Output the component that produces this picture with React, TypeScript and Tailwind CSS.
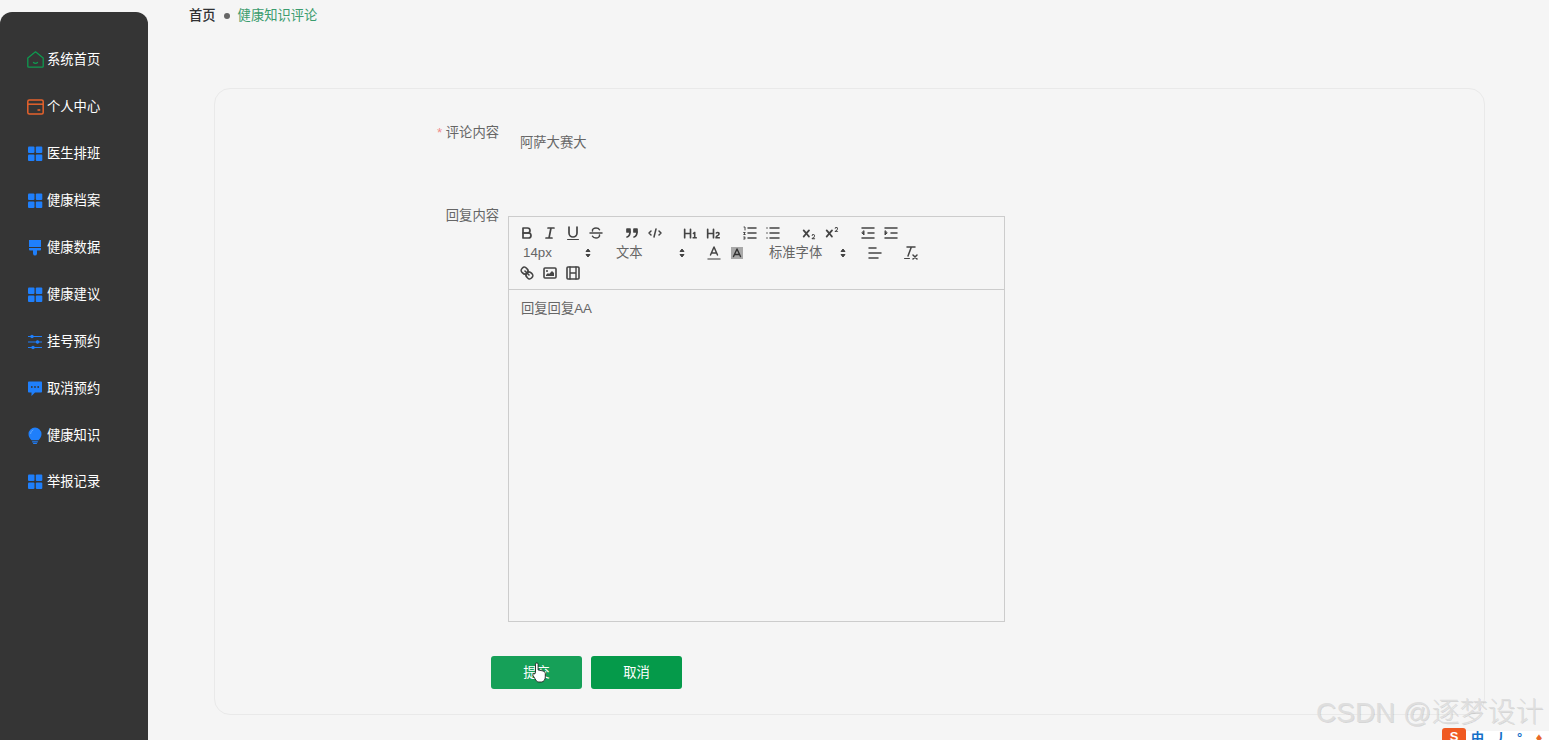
import type { ReactNode } from 'react';

const cjk = "font-['Arial','Liberation_Sans','Noto_Sans_CJK_SC',sans-serif]";

function Svg({ children, size = 18 }: { children: ReactNode; size?: number }) {
  return (
    <svg width={size} height={size} viewBox="0 0 18 18" fill="none" stroke="#444" strokeWidth={1.7} strokeLinecap="round" strokeLinejoin="round">
      {children}
    </svg>
  );
}

const Grid = () => (
  <svg width="18" height="18" viewBox="0 0 18 18" fill="#1f7ffb">
    <rect x="1" y="1.500" width="6.500" height="6.500" rx="1" />
    <rect x="8.800" y="1.500" width="6.500" height="6.500" rx="1" />
    <rect x="1" y="9.500" width="6.500" height="6.500" rx="1" />
    <rect x="8.800" y="9.500" width="6.500" height="6.500" rx="1" />
  </svg>
);

const Home = () => (
  <svg width="18" height="18" viewBox="0 0 18 18" fill="none" stroke="#0f9a50" strokeWidth="1.300" strokeLinejoin="round" strokeLinecap="round">
    <path d="M.8 7 8.500 .8 16.200 7v8.200a1 1 0 0 1-1 1H1.800a1 1 0 0 1-1-1z" />
    <path d="M6.500 11.500c1 1 3 1 4 0" />
  </svg>
);

const Wallet = () => (
  <svg width="18" height="18" viewBox="0 0 18 18" fill="none" stroke="#e5622c" strokeWidth="1.500">
    <rect x=".8" y="2" width="15.400" height="14" rx="1.500" />
    <path d="M.8 6.200h15.400" />
    <path d="M10.500 12h2.800" strokeWidth="1.600" />
  </svg>
);

const Brush = () => (
  <svg width="18" height="18" viewBox="0 0 18 18" fill="#1f7ffb">
    <path d="M2 1h12v7H2z" />
    <path d="M2 9h12v1.500a1 1 0 0 1-1 1h-3V14.500a2 2 0 0 1-4 0v-3H3a1 1 0 0 1-1-1z" />
  </svg>
);

const Sliders = () => (
  <svg width="18" height="18" viewBox="0 0 18 18" fill="#1f7ffb" stroke="#1f7ffb" strokeWidth="1.100">
    <path d="M1 3.500h14M1 9h14M1 14.500h14" />
    <circle cx="5" cy="3.500" r="1.200" />
    <circle cx="10.500" cy="9" r="1.200" />
    <circle cx="6" cy="14.500" r="1.200" />
  </svg>
);

const Chat = () => (
  <svg width="18" height="18" viewBox="0 0 18 18">
    <path fill="#1f7ffb" d="M1.800 1.500h12.400a.8.8 0 0 1 .8.8v9.400a.8.8 0 0 1-.8.8H8L4.500 16v-3.500H1.800a.8.8 0 0 1-.8-.8V2.300a.8.8 0 0 1 .8-.8z" />
    <circle cx="4.800" cy="7" r=".9" fill="#353535" />
    <circle cx="8" cy="7" r=".9" fill="#353535" />
    <circle cx="11.200" cy="7" r=".9" fill="#353535" />
  </svg>
);

const Bulb = () => (
  <svg width="18" height="18" viewBox="0 0 18 18" fill="#1f7ffb">
    <path d="M8 .5a6.500 6.500 0 0 1 6.500 6.500c0 2.800-1.500 4.500-3 6.200h-7C3 11.500 1.500 9.800 1.500 7A6.500 6.500 0 0 1 8 .5z" />
    <rect x="5" y="14.200" width="6" height="1.200" rx=".6" />
    <rect x="6" y="16" width="4" height="1.100" rx=".5" />
    <path d="M3.500 7a4.600 4.600 0 0 1 2.800-4.200" fill="none" stroke="#6fb0ff" strokeWidth=".8" />
  </svg>
);

const menu: { label: string; icon: ReactNode }[] = [
  { label: '系统首页', icon: <Home /> },
  { label: '个人中心', icon: <Wallet /> },
  { label: '医生排班', icon: <Grid /> },
  { label: '健康档案', icon: <Grid /> },
  { label: '健康数据', icon: <Brush /> },
  { label: '健康建议', icon: <Grid /> },
  { label: '挂号预约', icon: <Sliders /> },
  { label: '取消预约', icon: <Chat /> },
  { label: '健康知识', icon: <Bulb /> },
  { label: '举报记录', icon: <Grid /> },
];

const Btn = ({ children }: { children: ReactNode }) => (
  <span className="flex h-5 w-[23px] items-center justify-center">{children}</span>
);

const Group = ({ children }: { children: ReactNode }) => <div className="flex">{children}</div>;

const Arrows = () => (
  <svg className="-mr-[2px]" width="18" height="18" viewBox="0 0 18 18" fill="#444" stroke="#444" strokeWidth="1" strokeLinejoin="round">
    <polygon points="7 7.500 9 5 11 7.500" />
    <polygon points="7 10.500 9 13 11 10.500" />
  </svg>
);

function Picker({ label, width }: { label: string; width: string }) {
  return (
    <div className={`flex h-5 items-center justify-between pl-2 text-[13.3px] text-[#666] ${width}`}>
      <span>{label}</span>
      <Arrows />
    </div>
  );
}

function Toolbar() {
  return (
    <div className="border-b border-[#ccc] pb-[6px] pl-[6px] pt-[6px]">
      <div className="flex gap-[13px]">
        <Group>
          <Btn>
            <Svg>
              <path d="M5 4h4.500A2.500 2.500 0 0 1 12 6.500 2.500 2.500 0 0 1 9.500 9H5z" />
              <path d="M5 9h5.500a2.500 2.500 0 0 1 0 5H5z" />
            </Svg>
          </Btn>
          <Btn>
            <Svg>
              <path d="M7 4h6M5 14h6M8 14l2-10" />
            </Svg>
          </Btn>
          <Btn>
            <Svg>
              <path d="M5 3v6a4 4 0 0 0 8 0V3" />
              <rect x="3" y="15" width="12" height="1" rx=".5" fill="#444" stroke="none" />
            </Svg>
          </Btn>
          <Btn>
            <Svg>
              <path strokeWidth="1.500" d="M3 9h12M5.500 7c-.5-2 1.500-3 3.500-3s3 .6 3.500 1.700M12.500 11c.4 2-1.500 3-3.500 3s-3-.6-3.500-1.700" />
            </Svg>
          </Btn>
        </Group>
        <Group>
          <Btn>
            <Svg>
              <rect x="4" y="5" width="3" height="3" fill="#444" />
              <rect x="11" y="5" width="3" height="3" fill="#444" />
              <path d="M7 8c0 4-3 5-3 5M14 8c0 4-3 5-3 5" />
            </Svg>
          </Btn>
          <Btn>
            <Svg>
              <path strokeWidth="1.500" d="M5 7 3 9l2 2M13 7l2 2-2 2M10 5 8 13" />
            </Svg>
          </Btn>
        </Group>
        <Group>
          <Btn>
            <Svg size={15}>
              <path
                fill="#444"
                stroke="none"
                d="M10,4V14a1,1,0,0,1-2,0V10H3v4a1,1,0,0,1-2,0V4A1,1,0,0,1,3,4V8H8V4a1,1,0,0,1,2,0Zm6.06787,9.209H14.98975V7.59863a.54085.54085,0,0,0-.605-.60547h-.62744a1.01119,1.01119,0,0,0-.748.29688L11.645,8.56641a.5435.5435,0,0,0-.022.8584l.28613.30762a.53861.53861,0,0,0,.84717.0332l.09912-.08789a1.2137,1.2137,0,0,0,.2417-.35254h.02246s-.01123.30859-.01123.60547V13.209H12.041a.54085.54085,0,0,0-.605.60547v.43945a.54085.54085,0,0,0,.605.60547h4.02686a.54085.54085,0,0,0,.605-.60547v-.43945A.54085.54085,0,0,0,16.06787,13.209Z"
              />
            </Svg>
          </Btn>
          <Btn>
            <Svg size={15}>
              <path
                fill="#444"
                stroke="none"
                d="M16.73975,13.81445v.43945a.54085.54085,0,0,1-.605.60547H11.855a.58392.58392,0,0,1-.64893-.60547V14.0127c0-2.90527,3.39941-3.42187,3.39941-4.55469a.77675.77675,0,0,0-.84717-.78125,1.17684,1.17684,0,0,0-.83594.38477c-.2749.26367-.561.374-.85791.13184l-.4292-.34082c-.30811-.24219-.38525-.51758-.1543-.81445a2.97155,2.97155,0,0,1,2.45361-1.17676,2.45393,2.45393,0,0,1,2.68408,2.40918c0,2.45312-3.1792,2.92676-3.27832,3.93848h2.79443A.54085.54085,0,0,1,16.73975,13.81445ZM9,3A.99974.99974,0,0,0,8,4V8H3V4A1,1,0,0,0,1,4V14a1,1,0,0,0,2,0V10H8v4a1,1,0,0,0,2,0V4A.99974.99974,0,0,0,9,3Z"
              />
            </Svg>
          </Btn>
        </Group>
        <Group>
          <Btn>
            <Svg>
              <path strokeWidth="1.500" d="M7 4h8M7 9h8M7 14h8" />
              <path strokeWidth="1" d="M3 3h1v3M2.700 8.500h1.500L2.700 10.500h1.500M2.700 13h1.500l-.7 1 .7 1H2.700" />
            </Svg>
          </Btn>
          <Btn>
            <Svg>
              <path strokeWidth="1.500" d="M6 4h9M6 9h9M6 14h9M3 4h0M3 9h0M3 14h0" />
            </Svg>
          </Btn>
        </Group>
        <Group>
          <Btn>
            <Svg size={16}>
              <path
                fill="#444"
                stroke="none"
                d="M15.500 15H13.861a3.858 3.858 0 0 0 1.914-2.975 1.800 1.800 0 0 0-1.600-1.751A1.921 1.921 0 0 0 12.021 11.700a.5.5 0 1 0 .957.291.914.914 0 0 1 1.053-.725.810.810 0 0 1 .744.762c0 1.076-1.170 1.870-1.940 2.431A1.456 1.456 0 0 0 12 15.500a.5.5 0 0 0 .5.5h3a.5.5 0 0 0 0-1zM9.650 5.241a1 1 0 0 0-1.409.108L6 7.964 3.759 5.349a1 1 0 0 0-1.518 1.302L4.683 9.500 2.241 12.350a1 1 0 0 0 1.518 1.300L6 11.036l2.259 2.614a1 1 0 0 0 1.500-1.300L7.317 9.500l2.442-2.849a1 1 0 0 0-.109-1.410z"
              />
            </Svg>
          </Btn>
          <Btn>
            <Svg size={16}>
              <path
                fill="#444"
                stroke="none"
                d="M15.500 7H13.861a4.015 4.015 0 0 0 1.914-2.975 1.800 1.800 0 0 0-1.600-1.751A1.922 1.922 0 0 0 12.021 3.700a.5.5 0 1 0 .957.291.917.917 0 0 1 1.053-.725.810.810 0 0 1 .744.762c0 1.077-1.164 1.925-1.934 2.486A1.423 1.423 0 0 0 12 7.500a.5.5 0 0 0 .5.5h3a.5.5 0 0 0 0-1zM9.650 5.241a1 1 0 0 0-1.409.108L6 7.964 3.759 5.349a1 1 0 0 0-1.518 1.302L4.683 9.500 2.241 12.350a1 1 0 0 0 1.518 1.300L6 11.036l2.259 2.614a1 1 0 0 0 1.500-1.300L7.317 9.500l2.442-2.849a1 1 0 0 0-.109-1.410z"
              />
            </Svg>
          </Btn>
        </Group>
        <Group>
          <Btn>
            <Svg>
              <path strokeWidth="1.500" d="M3 4h12M3 14h12M9 9h6" />
              <polygon points="5 7 5 11 3 9" fill="#444" strokeWidth="1" />
            </Svg>
          </Btn>
          <Btn>
            <Svg>
              <path strokeWidth="1.500" d="M3 4h12M3 14h12M9 9h6" />
              <polygon points="3 7 3 11 5 9" fill="#444" strokeWidth="1" />
            </Svg>
          </Btn>
        </Group>
      </div>
      <div className="flex gap-[13px]">
        <Picker label="14px" width="w-[80px]" />
        <Picker label="文本" width="w-[81px]" />
        <Group>
          <Btn>
            <Svg>
              <path strokeWidth="1.500" d="M5.500 11 9 3l3.500 8M6.400 9h5.200" />
              <path strokeWidth="1.500" stroke="#777" d="M3 15h12" />
            </Svg>
          </Btn>
          <Btn>
            <Svg>
              <rect x="3" y="3" width="12" height="12" fill="#a8a8a8" stroke="none" />
              <path stroke="#333" strokeWidth="1.400" d="M5.500 12.500 9 5l3.500 7.500M6.600 10.500h4.800" />
            </Svg>
          </Btn>
        </Group>
        <Picker label="标准字体" width="w-[89px]" />
        <Group>
          <Btn>
            <Svg>
              <path strokeWidth="1.500" d="M3 4h7M3 9h12M3 14h9" />
            </Svg>
          </Btn>
        </Group>
        <Group>
          <Btn>
            <Svg>
              <path strokeWidth="1.500" d="M5 3h8M6 12 9.350 3M11 11l4 4M15 11l-4 4" />
              <rect x="2" y="14" width="6" height="1" rx=".5" fill="#444" stroke="none" />
            </Svg>
          </Btn>
        </Group>
      </div>
      <div className="flex">
        <Btn>
          <Svg>
            <path strokeWidth="1.600" d="M7 7l4 4" />
            <path strokeWidth="1.600" d="M8.900 4.577a3.476 3.476 0 0 1 .36 4.679A3.476 3.476 0 0 1 4.577 8.900C3.185 7.500 2.035 6.400 4.217 4.217S7.500 3.185 8.900 4.577Z" />
            <path strokeWidth="1.600" d="M13.423 9.100a3.476 3.476 0 0 0-4.679-.36 3.476 3.476 0 0 0 .36 4.679c1.392 1.392 2.500 2.542 4.679.36S14.815 10.500 13.423 9.100Z" />
          </Svg>
        </Btn>
        <Btn>
          <Svg>
            <rect x="3" y="4" width="12" height="10" rx="1" strokeWidth="1.600" />
            <circle cx="6" cy="7" r="1" fill="#444" stroke="none" />
            <polygon points="5 12 5 11 7 9 8 10 11 7 13 9 13 12" fill="#444" stroke="none" />
          </Svg>
        </Btn>
        <Btn>
          <Svg>
            <rect x="3" y="3" width="12" height="12" rx="1" strokeWidth="1.600" />
            <path strokeWidth="1.400" d="M6 3v12M12 3v12M6 9h6" />
          </Svg>
        </Btn>
      </div>
    </div>
  );
}

function HandCursor() {
  return (
    <svg className="absolute left-[41px] top-[6px]" width="15" height="21" viewBox="0 0 15 21" fill="#fff" stroke="#222" strokeWidth=".9" strokeLinejoin="round">
      <path d="M3.500 10V2.200a1.300 1.300 0 0 1 2.600 0V8l3.200.6c2.200.4 4 1 4 3V15c0 2.500-1.500 5-4 5H6.800c-1.500 0-2.300-.8-3-2L1 13.500c-.7-1.200.8-2.500 1.800-1.500z" />
    </svg>
  );
}

export default function App() {
  return (
    <div className={`relative flex h-screen overflow-hidden bg-[#f5f5f5] ${cjk}`}>
      <aside className="mt-3 h-[760px] w-[148px] shrink-0 rounded-t-[12px] bg-[#353535] pl-[27px] pt-[25px]">
        {menu.map((m) => (
          <div key={m.label} className="flex h-[46.900px] items-center gap-[2px] text-[13.3px] text-white">
            {m.icon}
            <span>{m.label}</span>
          </div>
        ))}
      </aside>

      <main className="min-w-0 flex-1 pl-[41px]">
        <div className="flex h-[32px] items-center text-[13.3px]">
          <span className="font-medium text-[#303133]">首页</span>
          <span className="mx-[8px] h-[6px] w-[6px] rounded-full bg-[#666]" />
          <span className="text-[#3b9c6e]">健康知识评论</span>
        </div>

        <div className="ml-[25px] mt-[56px] h-[627px] w-[1271px] rounded-[16px] border border-[#e9e9e9] pl-[221px] pt-[34px] text-[13.3px]">
          <div className="flex h-[93px]">
            <label className="w-[63px] pt-[1px] text-right leading-[18px] text-[#666]">
              <span className="text-[#f08a8a]">* </span>
              评论内容
            </label>
            <div className="ml-[21px] pt-[11px] leading-[18px] text-[#666]">阿萨大赛大</div>
          </div>

          <div className="flex">
            <label className="-mt-[9px] w-[63px] text-right leading-[18px] text-[#666]">回复内容</label>
            <div className="ml-[9px] h-[406px] w-[497px] border border-[#ccc]">
              <Toolbar />
              <div className="pl-[12px] pt-[10px] leading-[18px] text-[#666]">回复回复AA</div>
            </div>
          </div>

          <div className="ml-[55px] mt-[34px] flex gap-[9px] text-white">
            <button className="relative h-[33px] w-[91px] rounded-[3px] bg-[#16a058] text-[13.3px]">
              提交
              <HandCursor />
            </button>
            <button className="h-[33px] w-[91px] rounded-[3px] bg-[#059a4a] text-[13.3px]">取消</button>
          </div>
        </div>
      </main>

      {/* CSDN watermark burned into the capture */}
      <div className="absolute left-[1316px] top-[694px] whitespace-nowrap text-[28px] font-light leading-[38px] text-[#dedede] [text-shadow:1px_1px_0_rgba(0,0,0,0.12)]">
        CSDN @逐梦设计
      </div>

      {/* input method bar cut off by the window edge */}
      <div className="absolute left-[1442px] top-[728px] flex h-[14px] items-start">
        <div className="flex h-[16px] w-[24px] items-center justify-center rounded-[3px] bg-[#f05a22] text-[13px] font-bold leading-none text-white">S</div>
        <div className="mt-[3px] flex h-[12px] w-[83px] gap-[10px] bg-white pl-[5px] text-[13px] font-bold leading-[14px] text-[#1570c8]">
          <span>中</span>
          <span>丿</span>
          <span>°,</span>
          <span className="text-[#e8692a]">♦</span>
        </div>
      </div>
    </div>
  );
}
